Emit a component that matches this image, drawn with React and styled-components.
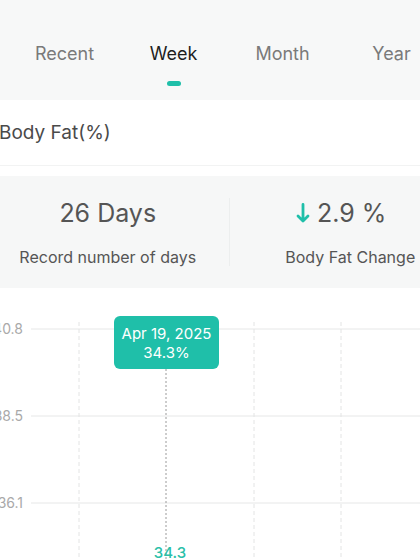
import React from 'react';
import styled, { createGlobalStyle } from 'styled-components';

const GlobalStyle = createGlobalStyle`
    body {
        margin: 0;
        background: #ffffff;
        overflow: hidden;
        font-family: Inter, 'Noto Sans', sans-serif;
    }
`;

const Page = styled.div`
    width: 420px;
    height: 560px;
    overflow: hidden;
    background: #ffffff;
`;

// the screenshot is a crop of a wider screen, so the content runs past the left edge
const Wide = styled.div`
    margin-left: -13px;
    width: 484px;
`;

const TabBar = styled.div`
    height: 100px;
    background: #f7f8f8;
    display: flex;
    padding-left: 23px;
    box-sizing: border-box;
`;

const Tab = styled.div`
    width: 109px;
    display: flex;
    flex-direction: column;
    align-items: center;
    padding-top: 41px;
    font-size: 18px;
    line-height: 26px;
    color: ${(p) => (p.active ? '#1e1e1e' : '#7a7a7a')};
`;

const Indicator = styled.div`
    width: 14px;
    height: 5px;
    border-radius: 3px;
    margin-top: 14px;
    background: ${(p) => (p.active ? '#1fbfa9' : 'transparent')};
`;

const TitleBar = styled.div`
    height: 65px;
    display: flex;
    align-items: center;
    padding-left: 12px;
    font-size: 19px;
    color: #4a4a4a;
    border-bottom: 1px solid #f2f3f3;
`;

const StatsCard = styled.div`
    margin-top: 10px;
    height: 112px;
    background: #f6f7f7;
    display: grid;
    grid-template-columns: 1fr 1px 1fr;
    align-items: center;
`;

const Stat = styled.div`
    display: flex;
    flex-direction: column;
    align-items: center;
    gap: 17px;
    color: #555555;
`;

const StatValue = styled.div`
    font-size: 25px;
    line-height: 32px;
    display: flex;
    align-items: center;
    gap: 7px;
    padding-right: ${(p) => p.shift || 0}px;
`;

const StatLabel = styled.div`
    font-size: 16px;
    line-height: 22px;
`;

const Divider = styled.div`
    height: 68px;
    background: #eceeee;
`;

const Chart = styled.div`
    position: relative;
    height: 272px;
`;

const Tooltip = styled.div`
    position: absolute;
    left: 114px;
    top: 28px;
    width: 105px;
    height: 53px;
    border-radius: 6px;
    background: #1fbfa9;
    color: #ffffff;
    font-size: 15px;
    line-height: 19px;
    display: flex;
    flex-direction: column;
    align-items: center;
    justify-content: center;
`;

const DownArrow = () => (
    <svg width="14" height="22" viewBox="0 0 14 22">
        <path d="M7 2.5 V19 M2 14 L7 19 L12 14" fill="none" stroke="#1fbfa9" strokeWidth="2.8" strokeLinecap="round" strokeLinejoin="round" />
    </svg>
);

const gridRows = [
    { y: 41, label: '40.8' },
    { y: 128, label: '38.5' },
    { y: 215, label: '36.1' },
];
const gridCols = [79, 254, 341, 428];

const App = () => {
    return (
        <Page>
            <GlobalStyle />
            <Wide>
                <TabBar>
                    {['Recent', 'Week', 'Month', 'Year'].map((t) => (
                        <Tab key={t} active={t === 'Week'}>
                            {t}
                            <Indicator active={t === 'Week'} />
                        </Tab>
                    ))}
                </TabBar>
                <TitleBar>Body Fat(%)</TitleBar>
                <StatsCard>
                    <Stat>
                        <StatValue>26 Days</StatValue>
                        <StatLabel>Record number of days</StatLabel>
                    </Stat>
                    <Divider />
                    <Stat>
                        <StatValue shift={18}>
                            <DownArrow />
                            2.9 %
                        </StatValue>
                        <StatLabel>Body Fat Change</StatLabel>
                    </Stat>
                </StatsCard>
            </Wide>
            <Chart>
                <svg width="420" height="272" style={{ display: 'block' }}>
                    {gridRows.map((r) => (
                        <g key={r.label}>
                            <line x1="31" x2="420" y1={r.y} y2={r.y} stroke="#e6e7e7" strokeWidth="1" />
                            <text x="23" y={r.y + 5} textAnchor="end" fontSize="14" fill="#a9a9a9" fontFamily="Inter, sans-serif">
                                {r.label}
                            </text>
                        </g>
                    ))}
                    {gridCols.map((x) => (
                        <line key={x} x1={x} x2={x} y1="34" y2="272" stroke="#e3e4e4" strokeWidth="1" strokeDasharray="4 3" />
                    ))}
                    <line x1="166" x2="166" y1="81" y2="272" stroke="#9a9a9a" strokeWidth="1" strokeDasharray="2 2" />
                    <text x="170" y="270" textAnchor="middle" fontSize="15" fontWeight="500" fill="#2bbfa9" fontFamily="Inter, sans-serif">
                        34.3
                    </text>
                </svg>
                <Tooltip>
                    <div>Apr 19, 2025</div>
                    <div>34.3%</div>
                </Tooltip>
            </Chart>
        </Page>
    );
};

export default App;
